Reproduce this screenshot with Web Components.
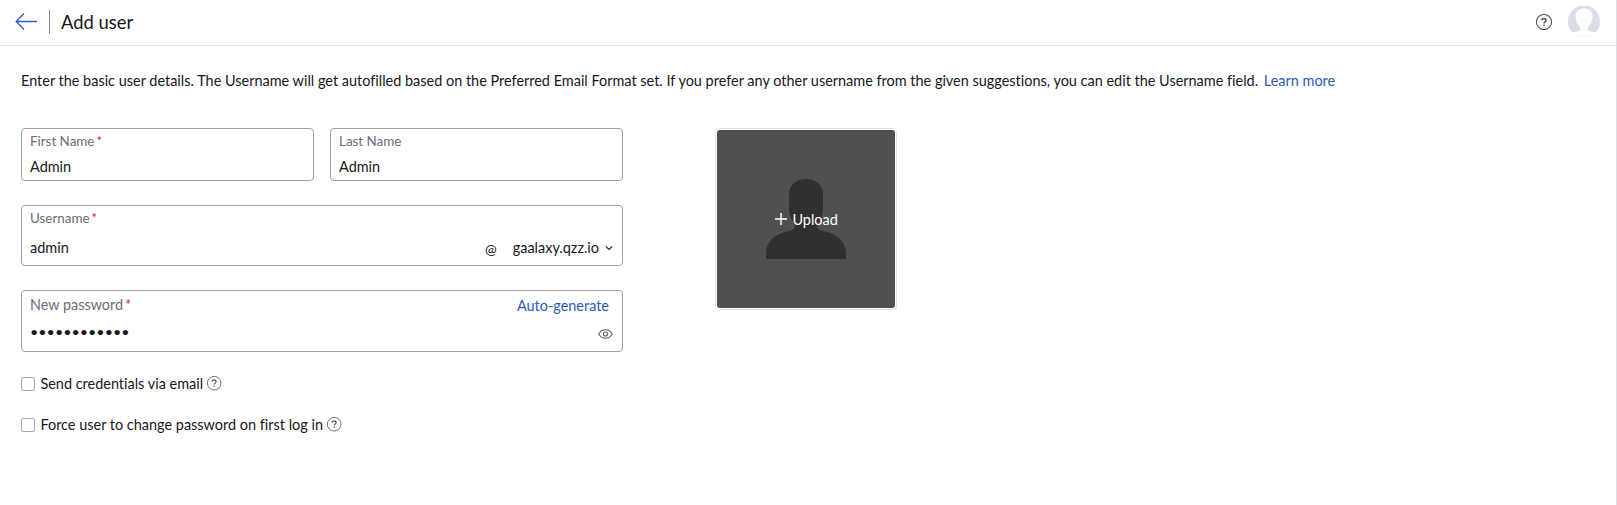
<!DOCTYPE html>
<html lang="en">
<head>
<meta charset="utf-8">
<title>Add user</title>
<style>
html,body{margin:0;height:100%;overflow:hidden;background:#fff}
body{font:14.46px/20px Lato,"Liberation Sans",sans-serif;color:#16181c;font-variant-ligatures:none}
</style>
</head>
<body>
<add-user-page></add-user-page>
<script>
const define = (name, html) => {
  const t = document.createElement('template');
  t.innerHTML = html;
  customElements.define(name, class extends HTMLElement {
    constructor() {
      super();
      this.attachShadow({mode: 'open'}).append(t.content.cloneNode(true));
    }
  });
};

define('help-icon', `
<style>
:host{display:block;flex:none;width:var(--size,14px);height:var(--size,14px);color:#62656c}
svg{display:block;width:100%;height:100%;overflow:visible}
</style>
<svg viewBox="0 0 16 16" fill="none" stroke="currentColor"><circle cx="8" cy="8" r="7.6" stroke-width="1.05"/><path d="M5.9 6.3C5.9 5.1 6.8 4.4 8 4.4s2.1.7 2.1 1.8c0 1.5-2 1.5-2 3.2" stroke-width="1.5"/><path d="M8.05 10.5v1.5" stroke-width="1.6"/></svg>`);

define('user-avatar', `
<style>:host{display:block;width:32px;height:32px}svg{display:block}</style>
<svg width="32" height="32" viewBox="0 0 32 32"><path fill="#d9dde8" d="M4.6 26.6A16 16 0 1 1 27.4 26.6C26 25.6 23 25.6 21.3 24.9C19.6 24.1 19.6 22.4 20.3 20.8C23 18.5 24.4 14.5 24.4 10.5C24.4 5 20.8 2.3 16.2 2.3S7.7 5 7.7 10.5C7.7 14.5 9 18.5 11.8 20.8C12.5 22.4 12.5 24.1 10.8 24.9C9 25.6 6 25.6 4.6 26.6Z"/><path d="M6.5 28.5A16 16 0 0 0 25.5 28.5" fill="none" stroke="#f1f2f6" stroke-width=".7"/></svg>`);

define('page-header', `
<style>
:host{display:flex;align-items:center;height:45px;border-bottom:1px solid #e1e1e3;box-sizing:content-box;padding:0 16px 0 15px}
.back{display:block;width:22px;height:18px;margin-top:-2px}
.bar{width:1px;height:24px;background:#85878d;margin:-1px 11px 0 12px}
h1{margin:-1px 0 0;font-size:18.4px;font-weight:400;line-height:24px;flex:1}
help-icon{--size:16px;margin:-1px 16px 0 0;color:#4c4f56}
user-avatar{margin-top:-1px}
</style>
<svg class="back" viewBox="0 0 22 18" fill="none" stroke="#2b5fc4" stroke-width="1.3"><path d="M22 8.5H1.2M9 .5 1.2 8.5 9 16.5"/></svg>
<span class="bar"></span>
<h1><slot></slot></h1>
<help-icon></help-icon>
<user-avatar></user-avatar>`);

define('text-link', `<style>:host{display:inline;color:#2b5bb5}</style><slot></slot>`);

define('form-field', `
<style>
:host{display:block;box-sizing:border-box;border:1px solid #a0a0a8;border-radius:4px;padding:var(--pad,3px) 8px 0;height:var(--h,53px)}
.top,.row{display:flex;justify-content:space-between}
.top{font-size:var(--label,13.4px);line-height:18px;height:18px;color:#6b6e76}
.row{margin-top:var(--gap,7px);height:20px}
.star{display:none;color:#c4332d;margin-left:2px;font-size:var(--star,13px);line-height:1}
:host([required]) .star{display:inline}
</style>
<div class="top"><span><slot name="label"></slot><span class="star">*</span></span><slot name="action"></slot></div>
<div class="row"><slot></slot><slot name="end"></slot></div>`);

define('domain-select', `
<style>
:host{display:flex;align-items:center}
.at{font-size:14px;margin-right:16px;position:relative;top:1px}
svg{margin:0 1px 0 6px}
</style>
<span class="at">@</span><span><slot></slot></span>
<svg width="8" height="6" viewBox="0 0 8 6" fill="none" stroke="#25282e" stroke-width="1.2"><path d="M.8 1.3 4 4.5 7.2 1.3"/></svg>`);

define('eye-icon', `
<style>:host{display:block;padding:6px 1px 0 0}svg{display:block}</style>
<svg width="15" height="10" viewBox="0 0 15 10" fill="none" stroke="#5c6068" stroke-width="1.1"><path d="M.7 5C4 -.6 11 -.6 14.3 5C11 10.6 4 10.6 .7 5Z"/><circle cx="7.5" cy="5" r="2"/></svg>`);

define('check-option', `
<style>
:host{display:flex;align-items:center;height:20px}
i{box-sizing:border-box;width:14px;height:14px;border:1.5px solid #a5a8b0;border-radius:2px;margin:1px 5.4px 0 0}
span{margin:2px 4px 0 0}
help-icon{--size:14.4px;margin-top:1px}
</style>
<i></i><span><slot></slot></span><help-icon></help-icon>`);

define('photo-upload', `
<style>
:host{display:block;box-sizing:border-box;width:182px;height:182px;padding:1px;border:1px solid #e2e2e2;border-radius:4px}
.photo{display:grid;height:100%;background:#505050;border-radius:3px;overflow:hidden;align-content:start}
.photo>*{grid-area:1/1}
.person{width:80px;height:81px;margin:48px 0 0 49px}
.label{display:flex;align-items:center;height:20px;color:#fff;margin:80px 0 0 58.4px;z-index:1}
.label svg{margin:-2px 5px 0 0}
</style>
<div class="photo">
<svg class="person" viewBox="0 0 80 81"><path fill="#303030" d="M0 81V75C0 64 9 55 24 53C28 52 29 50 29 46C25 42 23 37 23 31V17C23 7 30 1 40 1S57 7 57 17V31C57 37 55 42 51 46C51 50 52 52 56 53C71 55 80 64 80 75V81Z"/></svg>
<div class="label"><svg width="12" height="12" viewBox="0 0 12 12" stroke="#fff" stroke-width="1.4"><path d="M6 0V12M0 6H12"/></svg><slot></slot></div>
</div>`);

define('add-user-page', `
<style>
:host{display:block;box-sizing:border-box;height:505px;border-right:1px solid #dedee2}
main{padding:25px 21px 0}
p{margin:0;white-space:nowrap}
.learn{margin-left:2px}
.cols{display:flex;gap:92px;margin-top:37px}
form{display:grid;grid-template-columns:293px 293px;column-gap:16px;align-content:start}
.wide{grid-column:1/-1}
.user{--h:61px;--gap:11px;margin-top:24px}
.pass{--h:62px;--pad:5px;--gap:9px;--label:14.4px;--star:15px;margin-top:24px}
.auto{font-size:14.46px;line-height:20px;margin-right:5px}
.c1{margin-top:21px}.c2{margin-top:21px}
.dots{font-size:14.3px;line-height:18px}
</style>
<page-header>Add user</page-header>
<main>
<p>Enter the basic user details. The Username will get autofilled based on the Preferred Email Format set. If you prefer any other username from the given suggestions, you can edit the Username field. <text-link class="learn">Learn more</text-link></p>
<div class="cols">
<form>
<form-field required><span slot="label">First Name</span>Admin</form-field>
<form-field><span slot="label">Last Name</span>Admin</form-field>
<form-field class="wide user" required><span slot="label">Username</span>admin<domain-select slot="end">gaalaxy.qzz.io</domain-select></form-field>
<form-field class="wide pass" required><span slot="label">New password</span><text-link class="auto" slot="action">Auto-generate</text-link><span class="dots">••••••••••••</span><eye-icon slot="end"></eye-icon></form-field>
<check-option class="wide c1">Send credentials via email</check-option>
<check-option class="wide c2">Force user to change password on first log in</check-option>
</form>
<photo-upload>Upload</photo-upload>
</div>
</main>`);
</script>
</body>
</html>
